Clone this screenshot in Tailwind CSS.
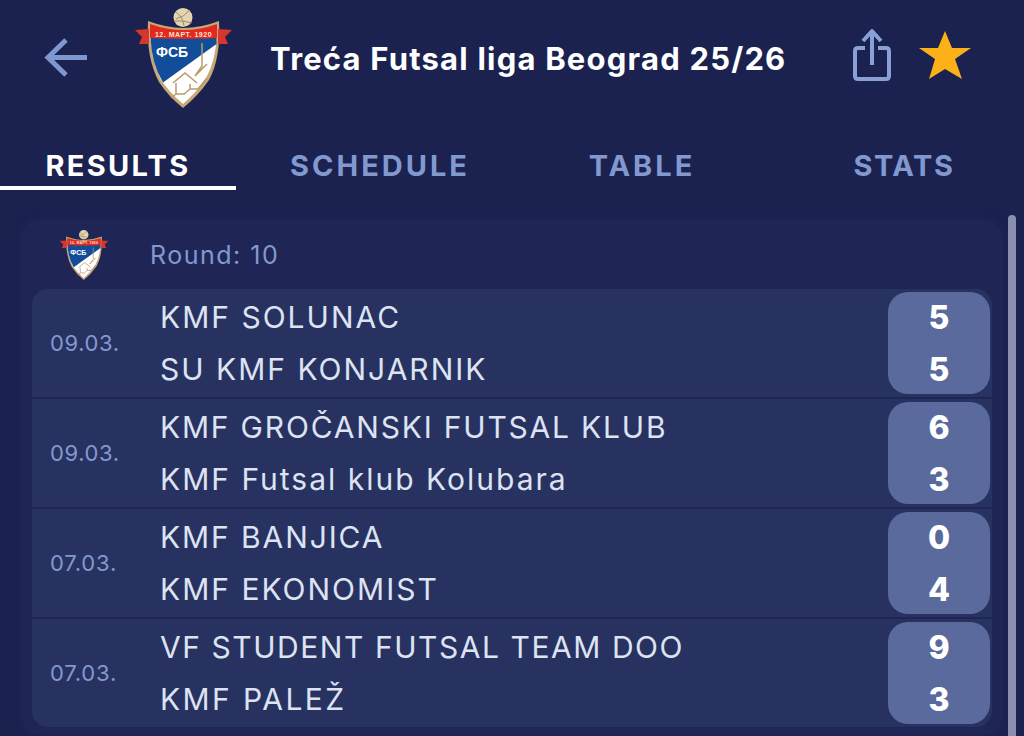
<!DOCTYPE html>
<html><head><meta charset="utf-8">
<script src="https://cdn.jsdelivr.net/npm/@tailwindcss/browser@4"></script>
</head>
<body class="m-0">
<svg class="hidden"><defs>
<symbol id="crest" viewBox="0 0 97 100">
<circle cx="48" cy="9.500" r="9.500" fill="#e4d3b0"/>
<path d="M41 4q7 5 8 14M55 2q-6 7-14 9M39 13q9-1 18 2" stroke="#a08a66" stroke-width="1" fill="none"/>
<path d="M13 13Q32 20 48 20Q66 20 84 13Q86 50 74 72Q63 88 48 100Q33 88 24 74Q11 50 13 13Z" fill="#c7a876"/>
<path d="M15.500 28H81.500Q81 52 71 70Q61 85 48 96Q35 85 26 72Q16 52 15.500 28Z" fill="#fff"/>
<path d="M15.500 28H81.500L81.500 36L28 74.500Q16 55 15.500 28Z" fill="#124d9a"/>
<path d="M0 22L14 21V36L4 36L7 29Z" fill="#d8352b"/><path d="M97 22L83 21V36L93 36L90 29Z" fill="#d8352b"/>
<path d="M15 16Q32 22 48 22Q66 22 82 16V30Q66 31 48 31Q32 31 15 30Z" fill="#e2281f"/>
<text x="48.500" y="28.500" text-anchor="middle" font-family="Liberation Sans" font-size="7" font-weight="700" fill="#f7e6d0" letter-spacing=".5">12. МАРТ. 1920</text>
<text x="21" y="49" font-family="Liberation Sans" font-size="14" font-weight="700" fill="#fff">ФСБ</text>
<path d="M67 35V58L60 68M60 68L72 56M38 75L50 65L62 75M41 75V86L36 90M41 86H49L55 81M55 76V81H63L72 70" fill="none" stroke="#b99a69" stroke-width="1.500"/>
</symbol>
</defs></svg>
<div class="relative w-[1024px] h-[736px] overflow-hidden bg-[#1b2250] font-['Inter','Liberation_Sans',sans-serif]">
<header class="h-[116px] flex items-center">
  <svg class="ml-[44px] w-[44px] h-[44px]" viewBox="0 0 44 44" fill="none" stroke="#7f97d1" stroke-width="5"><path d="M43 21.500H4M22 4L4 21.500L22 39"/></svg>
  <svg class="ml-[47px] w-[97px] h-[100px]"><use href="#crest"/></svg>
  <h1 class="ml-[38px] w-[516px] whitespace-nowrap text-[31px] leading-none font-bold text-white tracking-[1.2px]">Treća Futsal liga Beograd 25/26</h1>
  <svg class="ml-[66px] w-[40px] h-[54px] -mt-[6px]" viewBox="0 0 40 54" fill="none" stroke="#88a0d6" stroke-width="4"><path d="M13 20H6Q3 20 3 23V48Q3 51 6 51H34Q37 51 37 48V23Q37 20 34 20H26M20 37V3M11 13L20 3L29 13" stroke-linejoin="round"/></svg>
  <svg class="ml-[27px] w-[52px] h-[50px] -mt-[6px]" viewBox="0 0 52 50"><path d="M26 1L33 18L52 18L36 29L43 49L26 39L10 49L16 29L0 18L19 18Z" fill="#fbb117"/></svg>
</header>
<nav class="flex gap-[26px] h-[74px] text-[29px] leading-none font-bold text-[#8299cf]">
  <div class="w-[236px] h-[74px] pt-[35px] text-center text-white border-b-[4px] border-white tracking-[2.300px]">RESULTS</div>
  <div class="w-[236px] pt-[35px] text-center tracking-[3px]">SCHEDULE</div>
  <div class="w-[236px] pt-[35px] text-center tracking-[3px]">TABLE</div>
  <div class="w-[236px] pt-[35px] text-center tracking-[1.600px]">STATS</div>
</nav>
<main class="ml-[21px] mt-[30px] w-[981px] h-[515px] rounded-[18px] bg-[#1f2655] shadow-[0_0_10px_#1f2655]">
  <div class="h-[69px] flex items-center">
    <svg class="ml-[38px] w-[50px] h-[50px]"><use href="#crest"/></svg>
    <span class="ml-[41px] pt-[2px] text-[25px] leading-none text-[#8299cf] tracking-[1.500px]">Round: 10</span>
  </div>
  <div class="mx-[11px] w-[960px] flex flex-col gap-[2px] rounded-[16px] overflow-hidden text-[30px] leading-none text-[#dde3f2] tracking-[1.800px]">
    <div class="h-[108px] bg-[#283261] flex items-center pr-[2px]">
      <span class="w-[128px] pl-[18px] pb-[1px] text-[22px] text-[#8299cf] tracking-[0.600px]">09.03.</span>
      <div class="flex-1 flex flex-col gap-[22px]"><span class="tracking-[2px]">KMF SOLUNAC</span><span class="tracking-[2px]">SU KMF KONJARNIK</span></div>
      <div class="w-[102px] h-[102px] pt-[2px] rounded-[20px] bg-[#5a6a9c] flex flex-col items-center justify-center gap-[20px] text-[32px] font-extrabold text-white tracking-normal"><span>5</span><span>5</span></div>
    </div>
    <div class="h-[108px] bg-[#283261] flex items-center pr-[2px]">
      <span class="w-[128px] pl-[18px] pb-[1px] text-[22px] text-[#8299cf] tracking-[0.600px]">09.03.</span>
      <div class="flex-1 flex flex-col gap-[22px]"><span>KMF GROČANSKI FUTSAL KLUB</span><span class="tracking-[2px]">KMF Futsal klub Kolubara</span></div>
      <div class="w-[102px] h-[102px] pt-[2px] rounded-[20px] bg-[#5a6a9c] flex flex-col items-center justify-center gap-[20px] text-[32px] font-extrabold text-white tracking-normal"><span>6</span><span>3</span></div>
    </div>
    <div class="h-[108px] bg-[#283261] flex items-center pr-[2px]">
      <span class="w-[128px] pl-[18px] pb-[1px] text-[22px] text-[#8299cf] tracking-[0.800px]">07.03.</span>
      <div class="flex-1 flex flex-col gap-[22px]"><span class="tracking-[1.900px]">KMF BANJICA</span><span class="tracking-[2px]">KMF EKONOMIST</span></div>
      <div class="w-[102px] h-[102px] pt-[2px] rounded-[20px] bg-[#5a6a9c] flex flex-col items-center justify-center gap-[20px] text-[32px] font-extrabold text-white tracking-normal"><span>0</span><span>4</span></div>
    </div>
    <div class="h-[108px] bg-[#283261] flex items-center pr-[2px]">
      <span class="w-[128px] pl-[18px] pb-[1px] text-[22px] text-[#8299cf] tracking-[0.800px]">07.03.</span>
      <div class="flex-1 flex flex-col gap-[22px]"><span class="tracking-[1.550px]">VF STUDENT FUTSAL TEAM DOO</span><span class="tracking-[2.400px]">KMF PALEŽ</span></div>
      <div class="w-[102px] h-[102px] pt-[2px] rounded-[20px] bg-[#5a6a9c] flex flex-col items-center justify-center gap-[20px] text-[32px] font-extrabold text-white tracking-normal"><span>9</span><span>3</span></div>
    </div>
  </div>
</main>
<div class="absolute left-[1008px] top-[215px] w-[8px] h-[530px] rounded-full bg-[#8b8fad]"></div>
</div>
</body></html>
